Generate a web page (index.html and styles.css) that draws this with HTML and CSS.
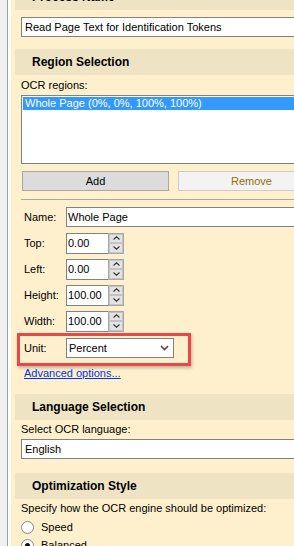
FILE: index.html
```html
<!DOCTYPE html>
<html>
<head>
<meta charset="utf-8">
<link rel="stylesheet" href="styles.css">
</head>
<body>
<div class="window">
  <div class="strip"></div>
  <div class="panel">
    <div class="band band-first">Process Name</div>
    <div class="sec sec-first">
      <div class="textbox wide">Read Page Text for Identification Tokens</div>
    </div>

    <div class="band">Region Selection</div>
    <div class="sec">
      <div class="label">OCR regions:</div>
      <div class="listbox">
        <div class="item selected">Whole Page (0%, 0%, 100%, 100%)</div>
      </div>
      <div class="buttons">
        <div class="btn btn-add">Add</div>
        <div class="btn btn-remove">Remove</div>
      </div>
      <div class="group">
        <div class="rows">
          <div class="row"><span class="lbl">Name:</span><div class="textbox name">Whole Page</div></div>
          <div class="row"><span class="lbl">Top:</span>
            <div class="spin"><span class="spin-val">0.00</span>
              <span class="spin-btns">
                <span class="sb"><svg width="7" height="4" viewBox="0 0 7 4"><path d="M0.5 3.5 L3.5 0.8 L6.5 3.5" fill="none" stroke="#3a3a3a" stroke-width="1.2"/></svg></span>
                <span class="sb"><svg width="7" height="4" viewBox="0 0 7 4"><path d="M0.5 0.5 L3.5 3.2 L6.5 0.5" fill="none" stroke="#3a3a3a" stroke-width="1.2"/></svg></span>
              </span>
            </div>
          </div>
          <div class="row"><span class="lbl">Left:</span>
            <div class="spin"><span class="spin-val">0.00</span>
              <span class="spin-btns">
                <span class="sb"><svg width="7" height="4" viewBox="0 0 7 4"><path d="M0.5 3.5 L3.5 0.8 L6.5 3.5" fill="none" stroke="#3a3a3a" stroke-width="1.2"/></svg></span>
                <span class="sb"><svg width="7" height="4" viewBox="0 0 7 4"><path d="M0.5 0.5 L3.5 3.2 L6.5 0.5" fill="none" stroke="#3a3a3a" stroke-width="1.2"/></svg></span>
              </span>
            </div>
          </div>
          <div class="row"><span class="lbl">Height:</span>
            <div class="spin"><span class="spin-val">100.00</span>
              <span class="spin-btns">
                <span class="sb"><svg width="7" height="4" viewBox="0 0 7 4"><path d="M0.5 3.5 L3.5 0.8 L6.5 3.5" fill="none" stroke="#3a3a3a" stroke-width="1.2"/></svg></span>
                <span class="sb"><svg width="7" height="4" viewBox="0 0 7 4"><path d="M0.5 0.5 L3.5 3.2 L6.5 0.5" fill="none" stroke="#3a3a3a" stroke-width="1.2"/></svg></span>
              </span>
            </div>
          </div>
          <div class="row"><span class="lbl">Width:</span>
            <div class="spin"><span class="spin-val">100.00</span>
              <span class="spin-btns">
                <span class="sb"><svg width="7" height="4" viewBox="0 0 7 4"><path d="M0.5 3.5 L3.5 0.8 L6.5 3.5" fill="none" stroke="#3a3a3a" stroke-width="1.2"/></svg></span>
                <span class="sb"><svg width="7" height="4" viewBox="0 0 7 4"><path d="M0.5 0.5 L3.5 3.2 L6.5 0.5" fill="none" stroke="#3a3a3a" stroke-width="1.2"/></svg></span>
              </span>
            </div>
          </div>
        </div>
        <div class="highlight">
          <div class="row"><span class="lbl">Unit:</span>
            <div class="combo"><span>Percent</span>
              <svg width="9" height="6" viewBox="0 0 9 6"><path d="M1 1 L4.5 4.5 L8 1" fill="none" stroke="#4a4a4a" stroke-width="1.6"/></svg>
            </div>
          </div>
        </div>
        <a class="link" href="#">Advanced options...</a>
      </div>
    </div>

    <div class="band band-lang">Language Selection</div>
    <div class="sec">
      <div class="label">Select OCR language:</div>
      <div class="textbox wide lang">English</div>
    </div>

    <div class="band band-opt">Optimization Style</div>
    <div class="sec">
      <div class="label">Specify how the OCR engine should be optimized:</div>
      <div class="radios">
        <div class="radio-row"><span class="radio"></span><span>Speed</span></div>
        <div class="radio-row"><span class="radio checked"></span><span>Balanced</span></div>
      </div>
    </div>
  </div>
</div>
</body>
</html>
```

FILE: styles.css
```css
html, body {
  margin: 0;
  padding: 0;
  background: #fef0cd;
  overflow: hidden;
}
body {
  font-family: "Liberation Sans", Arial, sans-serif;
  font-size: 11px;
  color: #000;
}
.window {
  display: flex;
  width: 340px;
  height: 546px;
  overflow: hidden;
}
.strip {
  width: 11px;
  flex: none;
  background: linear-gradient(to right, #f0f0f0 0 7px, #a0a0a0 7px 8px, #ffffff 8px 11px);
}
.panel {
  flex: 1;
  background: #fef0cd;
  min-width: 0;
}
.band {
  margin-left: 4px;
  height: 26px;
  line-height: 26px;
  padding-left: 17px;
  background: #eee3c2;
  font-weight: bold;
  font-size: 12px;
}
.band-first {
  margin-top: -16px;
}
.band-lang {
  margin-top: 14px;
}
.band-opt {
  margin-top: 14px;
}
.sec {
  padding-left: 10px;
}
.sec-first {
  padding-top: 7px;
  padding-bottom: 12px;
}
.label {
  line-height: 13px;
  margin-top: 3px;
}
.sec-first + .band + .sec > .label {
  margin-top: 4px;
}
.textbox {
  height: 20px;
  box-sizing: border-box;
  border: 1px solid #828282;
  background: #fff;
  line-height: 18px;
  padding-left: 3px;
  white-space: nowrap;
}
.textbox.lang {
  margin-top: 3px;
}
.listbox {
  margin-top: 3px;
  height: 69px;
  box-sizing: border-box;
  border: 1px solid #828282;
  background: #fff;
  padding: 1px;
}
.item {
  line-height: 13px;
  padding-left: 2px;
  white-space: nowrap;
}
.item.selected {
  background: #3399ff;
  color: #fff;
}
.buttons {
  margin-top: 7px;
  display: flex;
  gap: 9px;
  padding-left: 1px;
}
.btn {
  width: 147px;
  height: 20px;
  box-sizing: border-box;
  text-align: center;
  line-height: 18px;
  flex: none;
}
.btn-add {
  background: #dcdcdc;
  border: 1px solid #a8a8a8;
}
.btn-remove {
  background: #f3f3f3;
  border: 1px solid #cccccc;
  color: #9c6a00;
}
.group {
  margin-top: 8px;
  border-top: 1px solid #a9a9a9;
}
.rows {
  margin-top: 7px;
  display: flex;
  flex-direction: column;
  gap: 6px;
  padding-left: 3px;
}
.row {
  display: flex;
  align-items: center;
  height: 20px;
}
.lbl {
  width: 42px;
  flex: none;
}
.textbox.name {
  flex: 1;
  padding-left: 1px;
}
.spin {
  display: flex;
  width: 58px;
  height: 21px;
  flex: none;
}
.spin-val {
  width: 42px;
  box-sizing: border-box;
  border: 1px solid #828282;
  border-right: none;
  background: #fff;
  line-height: 19px;
  padding-left: 1px;
}
.spin-btns {
  width: 16px;
  display: flex;
  flex-direction: column;
  border: 1px solid #a8a8a8;
  box-sizing: border-box;
  background: #f4f4f4;
}
.sb {
  flex: 1;
  display: flex;
  align-items: center;
  justify-content: center;
  background: #e3e3e3;
  border: 1px solid #c4c4c4;
}
.highlight {
  margin-top: 2px;
  margin-left: -4px;
  width: 174px;
  box-sizing: border-box;
  border: 3px solid #e84848;
  padding: 2px 0 5px 4px;
  box-shadow: 1px 2px 3px rgba(0, 0, 0, 0.25);
}
.combo {
  width: 108px;
  height: 20px;
  box-sizing: border-box;
  border: 1px solid #828282;
  background: #fff;
  display: flex;
  align-items: center;
  justify-content: space-between;
  padding: 0 4px 0 2px;
}
.link {
  display: block;
  margin-top: 1px;
  padding-left: 3px;
  line-height: 13px;
  color: #0033ee;
  text-decoration: underline;
}
.radios {
  margin-top: 3px;
}
.radio-row {
  display: flex;
  align-items: center;
  height: 18px;
  gap: 7px;
}
.radio {
  width: 13px;
  height: 13px;
  box-sizing: border-box;
  border: 1px solid #8a8a8a;
  border-radius: 50%;
  background: #fff;
  display: flex;
  align-items: center;
  justify-content: center;
}
.radio.checked::after {
  content: "";
  width: 5px;
  height: 5px;
  border-radius: 50%;
  background: #111;
}
```
